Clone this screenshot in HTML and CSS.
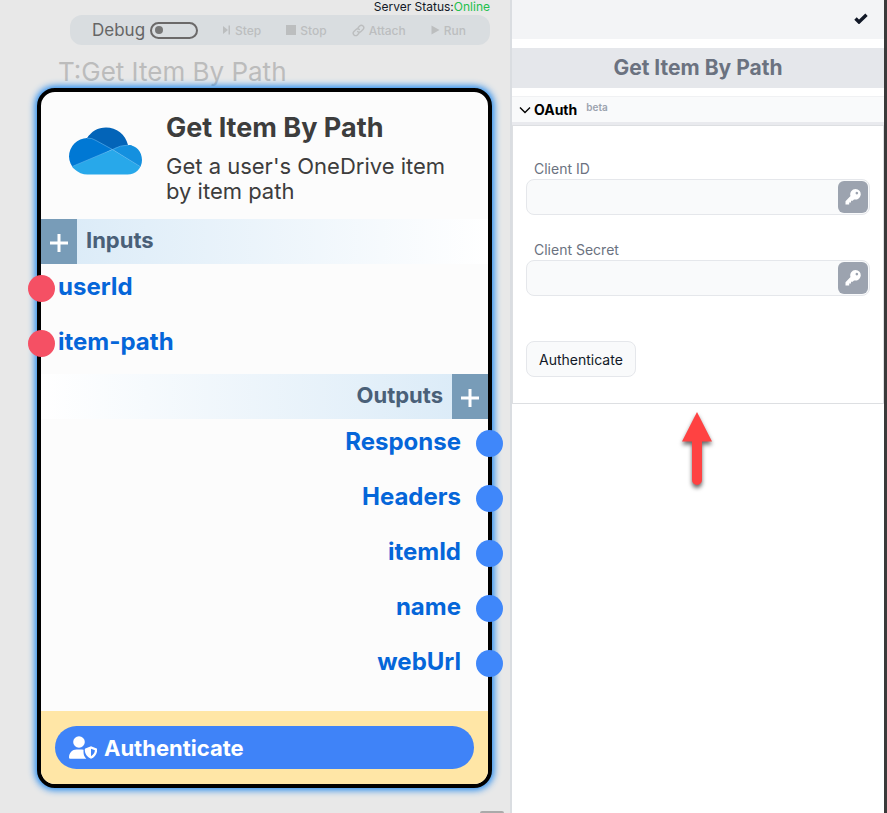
FILE: index.html
```html
<!DOCTYPE html>
<html lang="en">
<head>
<meta charset="utf-8">
<title>Get Item By Path</title>
<meta name="viewport" content="width=device-width, initial-scale=1">
<link rel="stylesheet" href="styles.css">
</head>
<body>
<main class="canvas">
  <p class="status">Server Status:<span class="online">Online</span></p>
  <div class="toolbar">
    <label class="debug" for="debug">Debug<input id="debug" class="toggle" type="checkbox" role="switch"></label>
    <button class="tool step" disabled><svg width="8" height="10" viewBox="0 0 8 10"><path d="M0 1 5 5 0 9ZM5.500 .5h1.500v9H5.500Z"/></svg>Step</button>
    <button class="tool stop" disabled><svg width="10" height="10" viewBox="0 0 10 10"><path d="M0 0h10v10H0Z"/></svg>Stop</button>
    <button class="tool attach" disabled><svg width="13" height="13" viewBox="0 0 13 13"><g transform="rotate(-45 6.500 6.500)" fill="none" stroke="currentColor" stroke-width="1.400" stroke-linecap="round"><path d="M4.800 8.800H2.600a2.400 2.400 0 0 1 0-4.800H5.500a2.300 2.300 0 0 1 2.300 2.400"/><path d="M8.200 4.200h2.200a2.400 2.400 0 0 1 0 4.800H7.500a2.300 2.300 0 0 1-2.300-2.400"/></g></svg>Attach</button>
    <button class="tool run" disabled><svg width="9" height="10" viewBox="0 0 9 10"><path d="M.5 .5 8.500 5 .5 9.500Z"/></svg>Run</button>
  </div>
  <h1 class="task">T:Get Item By Path</h1>
  <article class="node">
    <header class="node-head">
      <svg class="cloud" width="74" height="48" viewBox="0 0 74 48">
        <defs><clipPath id="cloud-shape"><path d="M18.500 47.500A18.500 18.500 0 0 1 0 29.500 18.500 18.500 0 0 1 18.300 11.100C22 4.500 29 .5 37 .5 47.500 .5 56.500 7.500 59 18 67 18 73 24.500 73 33S66.500 47.500 58.500 47.500Z"/></clipPath></defs>
        <g clip-path="url(#cloud-shape)">
          <path fill="#0078d4" d="M0 8h30l14 14L0 44Z"/>
          <path fill="#0364b8" d="M17 0h46v18.500L43.500 22.500 27 13.500Q22 10.800 17 11.500Z"/>
          <path fill="#1490df" d="M43.500 22.500Q51 18 60 18h14v23.500Z"/>
          <path fill="#28a8ea" d="M43.500 22.500 72 40v8H3l-1-8Z"/>
          <path fill="none" stroke="#63b5ee" stroke-width=".6" d="M2 40 43.500 22.500 72 40M18 11.200q5-.5 9 2.300l16.500 9Q51 18 60 18"/>
        </g>
      </svg>
      <div>
        <h2 class="node-title">Get Item By Path</h2>
        <p class="node-desc">Get a user's OneDrive item by item path</p>
      </div>
    </header>
    <section>
      <div class="strip"><button class="add" aria-label="Add input"><svg width="18" height="18" viewBox="0 0 18 18"><path d="M9 0v18M0 9h18"/></svg></button><h3 class="strip-title">Inputs</h3></div>
      <ul class="ports">
        <li class="port"><i class="pin"></i>userId</li>
        <li class="port"><i class="pin"></i>item-path</li>
      </ul>
    </section>
    <section class="out">
      <div class="strip"><button class="add" aria-label="Add output"><svg width="18" height="18" viewBox="0 0 18 18"><path d="M9 0v18M0 9h18"/></svg></button><h3 class="strip-title">Outputs</h3></div>
      <ul class="ports">
        <li class="port"><i class="pin"></i>Response</li>
        <li class="port"><i class="pin"></i>Headers</li>
        <li class="port"><i class="pin"></i>itemId</li>
        <li class="port"><i class="pin"></i>name</li>
        <li class="port"><i class="pin"></i>webUrl</li>
      </ul>
    </section>
    <footer class="node-foot">
      <button class="auth"><svg width="28" height="23" viewBox="0 0 28 23"><circle cx="10" cy="6" r="5.800"/><path d="M7.500 13.500H13l1.500.3V16c0 3 1 5 2.800 6.700H1.200Q0 22.700 0 21.500C0 17 3.300 13.500 7.500 13.500Z"/><path fill-rule="evenodd" d="m22 10.300 5.700 2.200c.5.200.5.500.5 1 0 4.500-2.500 7.700-6.200 9.300-3.700-1.600-6.200-4.800-6.200-9.300 0-.5 0-.8.500-1ZM22 12.800v7.400c2.200-1.300 3.700-3.200 3.900-5.900Z"/></svg>Authenticate</button>
    </footer>
  </article>
  <i class="handle"></i>
</main>
<aside class="panel">
  <div class="panel-bar"><button class="confirm" aria-label="Confirm"><svg width="14" height="11" viewBox="0 0 14 11"><path d="M1.500 5.500 5 9 12.500 1.700" fill="none" stroke="#111827" stroke-width="3.400"/></svg></button></div>
  <h2 class="panel-title">Get Item By Path</h2>
  <details class="group" open>
    <summary class="group-head"><svg width="12" height="8" viewBox="0 0 12 8"><path d="M1 1.500 6 6.500 11 1.500" fill="none" stroke="#000" stroke-width="1.400"/></svg>OAuth<span class="beta">beta</span></summary>
    <form class="form">
      <div class="field">
        <label for="client-id">Client ID</label>
        <div class="box"><input id="client-id" type="text"><button class="key" type="button" aria-label="Pick Client ID key"><svg width="16" height="16" viewBox="0 0 16 16"><path fill-rule="evenodd" d="M10.500 0a5.300 5.300 0 1 1-1.500 10.400L7.700 11.700H6v1.800H4.200V15.500H.5V12.200L5.500 7A5.300 5.300 0 0 1 10.500 0ZM11.800 2.800a1.300 1.300 0 1 0 .1 0Z"/></svg></button></div>
      </div>
      <div class="field">
        <label for="client-secret">Client Secret</label>
        <div class="box"><input id="client-secret" type="text"><button class="key" type="button" aria-label="Pick Client Secret key"><svg width="16" height="16" viewBox="0 0 16 16"><path fill-rule="evenodd" d="M10.500 0a5.300 5.300 0 1 1-1.500 10.400L7.700 11.700H6v1.800H4.200V15.500H.5V12.200L5.500 7A5.300 5.300 0 0 1 10.500 0ZM11.800 2.800a1.300 1.300 0 1 0 .1 0Z"/></svg></button></div>
      </div>
      <button class="submit" type="button">Authenticate</button>
    </form>
  </details>
  <svg class="arrow" width="40" height="86" viewBox="0 0 40 86"><path fill="#ff4242" d="M19 3 34 32.500H24V71a5 5 0 0 1-10 0V32.500H4Z"/></svg>
</aside>
</body>
</html>
```
FILE: styles.css
```css
* { box-sizing: border-box; margin: 0; padding: 0; }
body {
  display: grid;
  grid-template-columns: minmax(0, 1fr) 377px;
  min-height: 100vh;
  font-family: Inter, sans-serif;
  font-size: 14px;
  color: #111827;
}
button { font: inherit; color: inherit; border: 0; background: none; }
svg { flex: none; fill: currentColor; }
ul { list-style: none; }

.canvas { position: relative; background: #e8e8e8; padding: 0 18px 0 37px; overflow: hidden; }
.status { font-size: 12px; line-height: 14px; padding-right: 2px; text-align: right; }
.online { color: #22c04c; }
.toolbar {
  display: flex;
  align-items: center;
  height: 30px;
  margin: 1px 2px 0 33px;
  padding: 0 24px 0 22px;
  justify-content: space-between;
  border-radius: 12px;
  background: #d9dde0;
  color: #bcbebf;
}
.debug { display: flex; align-items: center; gap: 5px; font-size: 17px; color: #666; }
.toggle {
  appearance: none;
  display: flex;
  align-items: center;
  width: 48px;
  height: 17px;
  padding-left: 3px;
  border: 2px solid #6b6969;
  border-radius: 9px;
}
.toggle::before { content: ""; width: 8px; height: 8px; border-radius: 50%; background: #777; }
.toggle:checked::before { margin-left: auto; margin-right: 3px; }
.tool { display: flex; align-items: center; gap: 4px; font-size: 12px; font-weight: 500; }
.task { margin: 10px 0 0 21px; font-size: 26px; line-height: 33px; font-weight: 400; color: #bcbcbc; white-space: nowrap; }

.node {
  position: relative;
  border: 4px solid #000;
  border-radius: 18px;
  background: #fcfcfc;
  box-shadow: 0 0 7px 2px #1c86ee;
}
.node-head { display: flex; gap: 23px; padding: 20px 30px 15px 28px; color: #3d3d3d; }
.cloud { margin-top: 15px; }
.node-title { font-size: 27px; line-height: 32px; font-weight: 700; }
.node-desc { margin-top: 10px; font-size: 22px; line-height: 25px; }
.strip { display: flex; align-items: stretch; height: 45px; background: linear-gradient(90deg, #d9eaf7, #fff); }
.add { display: grid; place-items: center; width: 36px; padding-top: 3px; background: #789cb8; }
.add svg { stroke: #fff; stroke-width: 3; }
.strip-title { padding: 0 9px; font-size: 22px; line-height: 42px; font-weight: 700; color: #4a6078; }
.port {
  position: relative;
  height: 55px;
  padding: 0 27px 0 17px;
  font-size: 24px;
  line-height: 46px;
  font-weight: 700;
  color: #0566d9;
}
.pin { position: absolute; top: 11px; left: -13px; width: 27px; height: 27px; border-radius: 50%; background: #f55064; }
.out .strip { flex-direction: row-reverse; background: linear-gradient(270deg, #d9eaf7, #fff); }
.out .ports { text-align: right; padding-bottom: 17px; }
.out .pin { left: auto; right: -15px; background: #3f87fa; }
.node-foot { padding: 15px 14px; border-radius: 0 0 14px 14px; background: #ffe6a6; }
.auth {
  display: flex;
  align-items: center;
  gap: 7px;
  width: 100%;
  height: 43px;
  padding: 0 14px;
  border-radius: 22px;
  background: #3f83f8;
  color: #fff;
  font-size: 22px;
  font-weight: 700;
}
.handle { position: absolute; right: 6px; bottom: 0; width: 24px; height: 2px; border-radius: 2px 2px 0 0; background: #aaa; }

.panel { border-left: 2px solid #dadde1; border-right: 3px solid #3a3a3a; background: #fff; }
.panel-bar { display: flex; justify-content: flex-end; height: 39px; padding: 0 16px; background: #f3f4f6; }
.confirm { display: flex; align-items: center; height: 36px; }
.panel-title { margin-top: 9px; background: #e5e7eb; font-size: 21px; line-height: 40px; font-weight: 700; text-align: center; color: #6b7280; }
.group { margin-top: 8px; }
.group-head {
  display: flex;
  align-items: center;
  gap: 3px;
  height: 29px;
  padding: 0 7px;
  border-top: 1px solid #f0f1f3;
  border-bottom: 3px solid #e9eaee;
  background: #f9fafb;
  color: #000;
  font-weight: 700;
  list-style: none;
}
.beta { align-self: flex-start; margin-left: 6px; font-size: 10px; line-height: 21px; font-weight: 600; color: #9ca3af; }
.form { padding: 34px 13px 26px; border: 1px solid #dddfe2; }
.field { color: #6b7280; margin-bottom: 26px; }
.field label { display: block; padding-left: 8px; line-height: 17px; padding-bottom: 2px; }
.box { display: flex; height: 36px; padding: 1px; border: 1px solid #e5e7eb; border-radius: 8px; background: #f9fafb; }
.box input { flex: 1; min-width: 0; padding: 0 8px; border: 0; background: none; font: inherit; outline: 0; }
.key { display: grid; place-items: center; width: 30px; border-radius: 6px; background: #9ca3af; color: #fff; }
.submit { display: block; margin-top: 45px; height: 36px; padding: 0 12px; border: 1px solid #e5e7eb; border-radius: 8px; background: #f9fafb; }
.arrow { display: block; margin: 5px auto 0; filter: drop-shadow(0 3px 2px rgb(0 0 0 / 60%)); }
```
